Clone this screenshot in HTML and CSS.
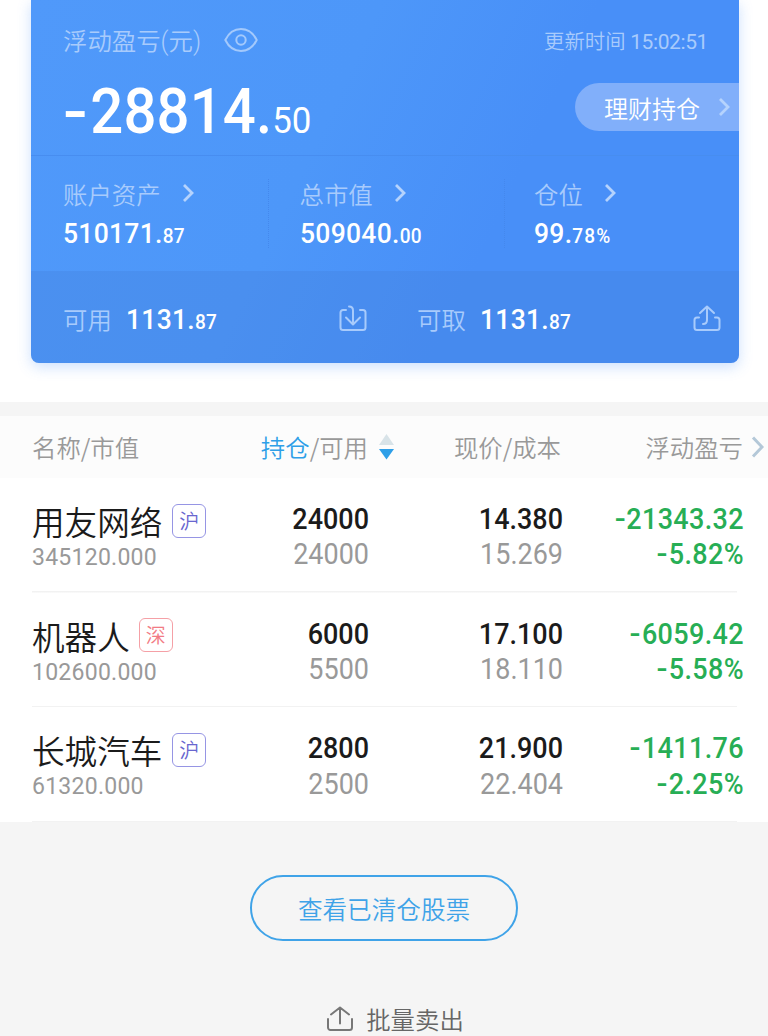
FILE: index.html
```html
<!DOCTYPE html>
<html lang="zh-CN">
<head>
<meta charset="utf-8">
<title>持仓</title>
<link rel="stylesheet" href="styles.css">
</head>
<body>
<main class="page">
  <section class="card">
    <div class="card-top">
      <div class="title-row">
        <span class="label">浮动盈亏<span class="paren">(</span>元<span class="paren">)</span></span>
        <svg class="eye" width="34" height="26" viewBox="0 0 34 26"><path d="M1.300 13C5 5.500 10.500 2 17 2s12 3.500 15.700 11C29 20.500 23.500 24 17 24S5 20.500 1.300 13z"/><circle cx="17" cy="13" r="4.700"/></svg>
        <span class="updated">更新时间 <span class="time">15:02:51</span></span>
      </div>
      <div class="total-row">
        <div class="total"><span class="minus">-</span>28814.<span class="total-dec">50</span></div>
        <a class="pill">理财持仓<svg class="chev" width="12" height="20" viewBox="0 0 12 20"><path d="M2 2l8 8-8 8"/></svg></a>
      </div>
    </div>
    <div class="stats">
      <div class="stat">
        <div class="stat-label">账户资产<svg class="chev" width="12" height="20" viewBox="0 0 12 20"><path d="M2 2l8 8-8 8"/></svg></div>
        <div class="amount">510171.<span class="dec">87</span></div>
      </div>
      <div class="stat divided">
        <div class="stat-label">总市值<svg class="chev" width="12" height="20" viewBox="0 0 12 20"><path d="M2 2l8 8-8 8"/></svg></div>
        <div class="amount">509040.<span class="dec">00</span></div>
      </div>
      <div class="stat divided">
        <div class="stat-label">仓位<svg class="chev" width="12" height="20" viewBox="0 0 12 20"><path d="M2 2l8 8-8 8"/></svg></div>
        <div class="amount">99.<span class="dec percent">78%</span></div>
      </div>
    </div>
    <div class="cash">
      <div class="cash-item">
        <span class="label">可用</span><span class="amount">1131.<span class="dec">87</span></span>
        <svg class="cash-icon" width="28" height="28" viewBox="0 0 28 28"><path d="M7 5H4a2.500 2.500 0 0 0-2.500 2.500v15A2.500 2.500 0 0 0 4 25h20a2.500 2.500 0 0 0 2.500-2.500v-15A2.500 2.500 0 0 0 24 5h-3M10 1.500c3 0 4 1.500 4 4V19M7 12.500l7 7 7-7"/></svg>
      </div>
      <div class="cash-item">
        <span class="label">可取</span><span class="amount">1131.<span class="dec">87</span></span>
        <svg class="cash-icon" width="28" height="28" viewBox="0 0 28 28"><path d="M6 12.500H4A2.500 2.500 0 0 0 1.500 15v7.500A2.500 2.500 0 0 0 4 25h20a2.500 2.500 0 0 0 2.500-2.500V15a2.500 2.500 0 0 0-2.500-2.500h-2M10 19c3 0 4-1.500 4-4V2M7 8l7-6.500L21 8"/></svg>
      </div>
    </div>
  </section>

  <section class="holdings">
    <div class="grid head">
      <span>名称/市值</span>
      <span class="num-col sort"><span><b class="active">持仓</b>/可用</span><svg class="sort-icon" width="15" height="26" viewBox="0 0 15 26"><path class="up" d="M7.500 0L15 11H0z"/><path class="down" d="M0 15h15l-7.500 10.500z"/></svg></span>
      <span class="num-col price">现价/成本</span>
      <span class="num-col last">浮动盈亏<svg class="more" width="13" height="22" viewBox="0 0 13 22"><path d="M2 1.500l9 9.500-9 9.500"/></svg></span>
    </div>
    <div class="grid row">
      <div><div class="name">用友网络<span class="tag">沪</span></div><div class="value">345120.000</div></div>
      <div class="num-col"><div>24000</div><div class="sub">24000</div></div>
      <div class="num-col"><div>14.380</div><div class="sub">15.269</div></div>
      <div class="num-col loss"><div><span class="sign">-</span>21343.32</div><div><span class="sign">-</span>5.82%</div></div>
    </div>
    <div class="grid row">
      <div><div class="name">机器人<span class="tag sz">深</span></div><div class="value">102600.000</div></div>
      <div class="num-col"><div>6000</div><div class="sub">5500</div></div>
      <div class="num-col"><div>17.100</div><div class="sub">18.110</div></div>
      <div class="num-col loss"><div><span class="sign">-</span>6059.42</div><div><span class="sign">-</span>5.58%</div></div>
    </div>
    <div class="grid row">
      <div><div class="name">长城汽车<span class="tag">沪</span></div><div class="value">61320.000</div></div>
      <div class="num-col"><div>2800</div><div class="sub">2500</div></div>
      <div class="num-col"><div>21.900</div><div class="sub">22.404</div></div>
      <div class="num-col loss"><div><span class="sign">-</span>1411.76</div><div><span class="sign">-</span>2.25%</div></div>
    </div>
  </section>

  <footer class="foot">
    <a class="cleared">查看已清仓股票</a>
    <a class="batch"><svg width="26" height="25" viewBox="0 0 26 25"><path d="M1 13v8.500A2.500 2.500 0 0 0 3.500 24h19a2.500 2.500 0 0 0 2.500-2.500V13M13 17.500V1.500M4 8.500l9-7 9 7"/></svg>批量卖出</a>
  </footer>
</main>
</body>
</html>
```
FILE: styles.css
```css
* { box-sizing: border-box; }
body {
  margin: 0;
  background: #f5f5f5;
  font-family: "Noto Sans CJK SC", sans-serif;
  font-weight: 350;
}
svg { fill: none; flex: none; stroke-linecap: round; stroke-linejoin: round; }
.page {
  width: 768px;
  height: 1036px;
  overflow: hidden;
  background: linear-gradient(#fff 402px, #f5f5f5 402px);
}

.card {
  width: 708px;
  height: 363px;
  margin-left: 31px;
  border-radius: 0 0 8px 8px;
  background: linear-gradient(115deg, #5099fa 0%, #4d97f9 40%, #488ff8 65%, #488ff8 100%);
  box-shadow: 0 4px 14px rgba(72, 143, 248, .28);
  color: #fff;
  display: flex;
  flex-direction: column;
}
.card-top { flex: none; height: 155px; padding: 21px 0 0 32px; }
.title-row { display: flex; align-items: center; height: 40px; color: #a8cbfc; }
.label { font-size: 24.400px; line-height: 40px; color: #a8cbfc; white-space: nowrap; }
.paren { font-family: Roboto, sans-serif; font-size: 25px; }
.eye { margin: -3px 0 0 23px; stroke: #a3c9fc; stroke-width: 2; }
.updated { margin: -2px 31px 0 auto; font-size: 20.400px; white-space: pre; }
.time { font: 400 21px Roboto, sans-serif; letter-spacing: -.4px; }
.total-row { display: flex; align-items: flex-start; justify-content: space-between; height: 62px; margin-top: 20px; }
.total {
  font: 500 62.500px/62px Roboto, sans-serif;
  letter-spacing: .1px;
  white-space: nowrap;
  transform: scaleX(.93);
  transform-origin: left;
}
.minus { display: inline-block; margin-right: 8px; transform: scaleX(1.25); transform-origin: left; }
.total-dec { font-size: 37.500px; font-weight: 400; letter-spacing: 0; }
.pill {
  display: flex;
  align-items: center;
  width: 164px;
  height: 48px;
  margin-top: 2px;
  padding-left: 29px;
  border-radius: 24px 0 0 24px;
  background: #81affa;
  font-size: 24px;
}
.chev { margin: -2px 0 0 21px; stroke: #b5d3fd; stroke-width: 2.800; stroke-linecap: butt; stroke-linejoin: miter; }
.pill .chev { margin: 0 0 0 18px; }

.stats {
  flex: none;
  display: grid;
  grid-template-columns: 236.500px 236.500px 1fr;
  height: 116px;
  padding-top: 23px;
  border-top: 1px solid #478df0;
}
.stat { height: 69px; padding-left: 32px; }
.stat.divided { border-left: 1px dotted #4488ed; padding-left: 31px; }
.stat:last-child { padding-left: 29px; }
.stat-label { display: flex; align-items: center; height: 30px; font-size: 24.400px; line-height: 30px; color: #a8cbfc; }
.amount {
  font: 500 28.500px/50px Roboto, sans-serif;
  letter-spacing: .3px;
  white-space: nowrap;
  transform: scaleX(.93);
  transform-origin: left;
}
.dec { font-size: 20.500px; letter-spacing: .2px; }
.percent { letter-spacing: 1.200px; }
.cash {
  display: grid;
  grid-template-columns: 354px 354px;
  flex: none;
  height: 92px;
  border-radius: 0 0 8px 8px;
  background: rgba(70, 130, 220, .35);
}
.cash-item { display: flex; align-items: center; height: 92px; padding: 4px 18px 0 32px; }
.cash-item .amount { margin: 3px 0 0 14px; }
.cash-icon { margin-left: auto; stroke: #a8cbfc; stroke-width: 2; }

.holdings { margin-top: 39px; border-top: 14px solid #f5f5f5; background: #fff; }
.grid { display: grid; grid-template-columns: 205px 132px 194px 181px; padding-left: 32px; }
.head { height: 62px; background: #fcfcfc; font-size: 24.400px; line-height: 62px; color: #999; }
.num-col { text-align: right; white-space: nowrap; }
.sort { display: flex; justify-content: flex-end; align-items: center; padding-right: 1px; }
.sort-icon { margin: 0 -26px 0 11px; }
.price { padding-right: 2px; }
.up { fill: #d8e3e8; }
.down { fill: #2e9fe8; }
.active { font-weight: 350; color: #2e9fe8; }
.last { display: flex; justify-content: flex-end; align-items: center; padding-right: 1px; }
.more { margin: 0 -21px 0 8px; stroke: #b4c8d8; stroke-width: 3; stroke-linecap: butt; stroke-linejoin: miter; }
.row {
  height: 114.700px;
  padding-top: 24px;
  background: linear-gradient(#f2f2f2, #f2f2f2) 32px 100% / 705px 1.500px no-repeat;
}
.row .num-col {
  font: 500 29px/35.200px Roboto, sans-serif;
  color: #1b1b1b;
  transform: scaleX(.93);
  transform-origin: right;
}
.row .sub { font-weight: 400; color: #999; }
.row .loss { color: #27ae55; letter-spacing: .4px; }
.sign { display: inline-block; margin-right: 1.500px; transform: scaleX(1.200); }
.name { display: flex; align-items: center; height: 37px; font-size: 32.600px; line-height: 37px; color: #1b1b1b; white-space: nowrap; }
.tag {
  width: 34px;
  height: 34px;
  margin-left: 10px;
  border: 1.500px solid #9695e4;
  border-radius: 6px;
  font-size: 20px;
  line-height: 31px;
  text-align: center;
  color: #6966cf;
}
.tag.sz { margin-left: 9px; border-color: #f5a0a6; color: #f27b84; }
.value {
  font: 400 24.500px/35px Roboto, sans-serif;
  letter-spacing: .25px;
  color: #999;
  transform: scaleX(.94);
  transform-origin: left;
}

.foot { display: flex; flex-direction: column; align-items: center; padding-top: 53px; }
.cleared {
  width: 268px;
  height: 66px;
  border: 2px solid #3fa3e8;
  border-radius: 33px;
  font-size: 24.600px;
  line-height: 63px;
  text-align: center;
  color: #3fa3e8;
}
.batch { display: flex; align-items: center; gap: 13px; height: 40px; margin: 58px 0 0 23px; font-size: 24.400px; line-height: 40px; color: #666; }
.batch svg { margin-top: -2px; stroke: #777; stroke-width: 2; }
```
